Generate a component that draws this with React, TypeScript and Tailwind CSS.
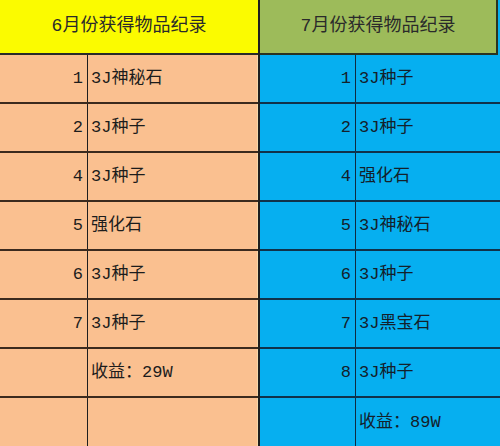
import React from "react";

type Row = { n: string; t: string };

const left: Row[] = [
  { n: "1", t: "3J神秘石" },
  { n: "2", t: "3J种子" },
  { n: "4", t: "3J种子" },
  { n: "5", t: "强化石" },
  { n: "6", t: "3J种子" },
  { n: "7", t: "3J种子" },
  { n: "", t: "收益：29W" },
  { n: "", t: "" },
];

const right: Row[] = [
  { n: "1", t: "3J种子" },
  { n: "2", t: "3J种子" },
  { n: "4", t: "强化石" },
  { n: "5", t: "3J神秘石" },
  { n: "6", t: "3J种子" },
  { n: "7", t: "3J黑宝石" },
  { n: "8", t: "3J种子" },
  { n: "", t: "收益：89W" },
];

const font = {
  fontFamily: '"Liberation Mono", "Noto Sans CJK SC", monospace',
};

export default function App() {
  return (
    <div
      className="w-[500px] h-[446px] overflow-hidden flex bg-white text-[#1c1c1c]"
      style={font}
    >
      {/* left table */}
      <div className="w-[260px] shrink-0 flex flex-col border-r-2 border-[#1e1e1e] bg-[#fac090]">
        <div className="h-[55px] shrink-0 flex items-center justify-center bg-[#fbfb00] border-b-2 border-[#2a2a2a] text-[18px] text-[#2a2a2a]">
          6月份获得物品纪录
        </div>
        {left.map((r, i) => (
          <div
            key={i}
            className="h-[49px] shrink-0 flex border-b-2 border-[#3b2a1e] last:border-b-0"
          >
            <div className="w-[88px] shrink-0 flex items-center justify-end pr-[4px] border-r-[1.5px] border-[#1e1e1e] text-[17px]">
              {r.n}
            </div>
            <div className="flex-1 flex items-center pl-[3px] text-[17px] border-r border-[#f6d7a8]">
              {r.t}
            </div>
          </div>
        ))}
      </div>
      {/* right table */}
      <div className="flex-1 flex flex-col bg-[#06aff0]">
        <div className="h-[55px] shrink-0 flex items-center justify-center bg-[#9dbb5a] border-b-2 border-r-2 border-[#2a3320] mr-[2px] text-[18px] text-[#2a2a2a]">
          7月份获得物品纪录
        </div>
        {right.map((r, i) => (
          <div
            key={i}
            className="h-[49px] shrink-0 flex border-b-2 border-[#10324a] last:border-b-0"
          >
            <div className="w-[96px] shrink-0 flex items-center justify-end pr-[4px] border-r-[1.5px] border-[#0e2a40] text-[17px] text-[#14202a]">
              {r.n}
            </div>
            <div className="flex-1 flex items-center pl-[3px] text-[17px] text-[#14202a]">
              {r.t}
            </div>
          </div>
        ))}
      </div>
    </div>
  );
}
